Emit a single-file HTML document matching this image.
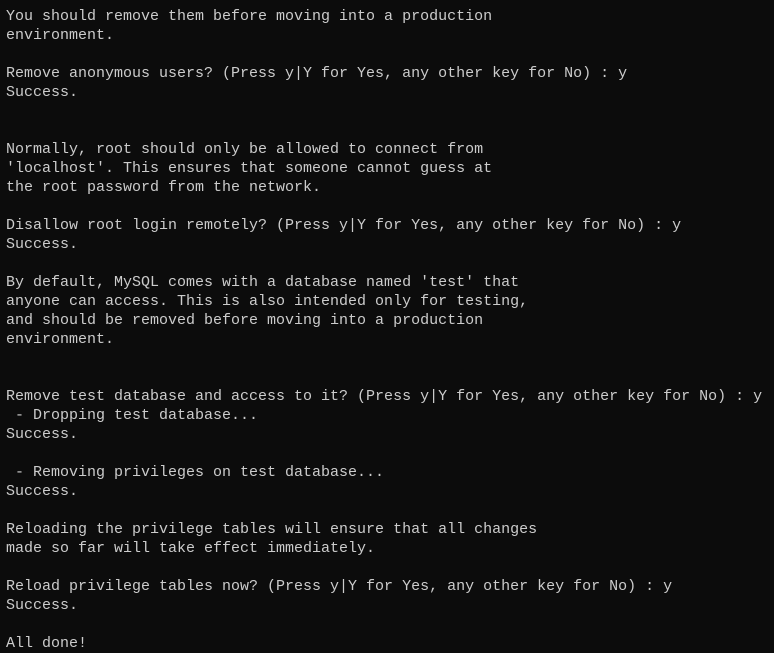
<!DOCTYPE html>
<html><head><meta charset="utf-8"><style>
html,body{margin:0;padding:0;background:#0c0c0c;width:774px;height:653px;overflow:hidden}
pre{margin:0;position:absolute;left:6px;top:7px;font-family:"Liberation Mono",monospace;font-size:15px;line-height:19px;color:#cccccc}
</style></head><body><pre>You should remove them before moving into a production
environment.

Remove anonymous users? (Press y|Y for Yes, any other key for No) : y
Success.


Normally, root should only be allowed to connect from
'localhost'. This ensures that someone cannot guess at
the root password from the network.

Disallow root login remotely? (Press y|Y for Yes, any other key for No) : y
Success.

By default, MySQL comes with a database named 'test' that
anyone can access. This is also intended only for testing,
and should be removed before moving into a production
environment.


Remove test database and access to it? (Press y|Y for Yes, any other key for No) : y
 - Dropping test database...
Success.

 - Removing privileges on test database...
Success.

Reloading the privilege tables will ensure that all changes
made so far will take effect immediately.

Reload privilege tables now? (Press y|Y for Yes, any other key for No) : y
Success.

All done!</pre></body></html>
